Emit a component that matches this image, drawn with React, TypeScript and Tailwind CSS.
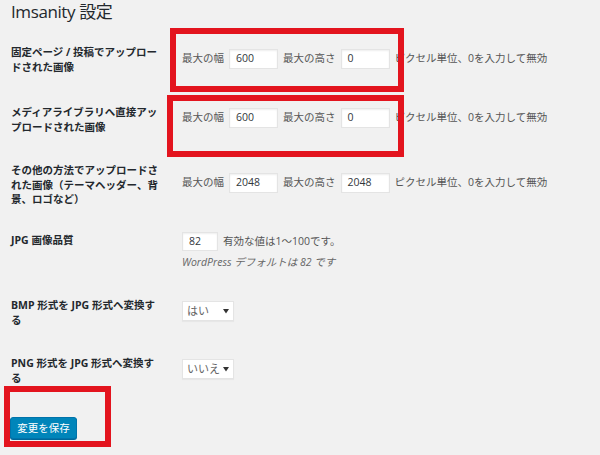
import React from "react";

const FONT = "font-['Open_Sans','Noto_Sans_CJK_JP',sans-serif]";

function TextInput({ value, w = "w-[49px]", h = "h-[20px]" }: { value: string; w?: string; h?: string }) {
  return (
    <div
      className={`${w} ${h} flex items-center bg-white border border-[#e4e4e4] shadow-[inset_0_1px_2px_rgba(0,0,0,0.07)] pl-[6px] text-[10.5px] text-[#32373c]`}
    >
      {value}
    </div>
  );
}

function SizeFields({ w, h }: { w: string; h: string }) {
  return (
    <div className="flex items-center gap-[5px] text-[10.5px] text-[#555]">
      <span>最大の幅</span>
      <TextInput value={w} />
      <span>最大の高さ</span>
      <TextInput value={h} />
      <span>ピクセル単位、0を入力して無効</span>
    </div>
  );
}

function SelectBox({ label }: { label: string }) {
  return (
    <div className="w-[52px] h-[20px] flex items-center justify-between bg-white border border-[#e4e4e4] shadow-[0_1px_1px_rgba(0,0,0,0.04)] pl-[4px] pr-[4px] text-[11px] text-[#666]">
      <span>{label}</span>
      <svg width="6" height="5" viewBox="0 0 6 5">
        <path d="M0 0 L6 0 L3 4.5 Z" fill="#333" />
      </svg>
    </div>
  );
}

function Row({
  h,
  label,
  contentPt,
  labelPt = "pt-0",
  children,
}: {
  h: string;
  label: React.ReactNode;
  contentPt: string;
  labelPt?: string;
  children: React.ReactNode;
}) {
  return (
    <div className={`flex ${h}`}>
      <div
        className={`w-[182px] shrink-0 pl-[11px] ${labelPt} whitespace-nowrap font-bold text-[10.5px] leading-[14.5px] text-[#23282d]`}
      >
        {label}
      </div>
      <div className={contentPt}>{children}</div>
    </div>
  );
}

export default function App() {
  return (
    <div className={`relative w-[600px] h-[455px] overflow-hidden bg-[#f1f1f1] ${FONT}`}>
      <div className="h-[45px] pl-[11px] pt-[1px] text-[17px] leading-[22px] tracking-[-0.4px] text-[#23282d]">
        Imsanity 設定
      </div>

      <Row
        h="h-[60px]"
        contentPt="pt-[4px]"
        label={
          <>
            固定ページ / 投稿でアップロー
            <br />
            ドされた画像
          </>
        }
      >
        <SizeFields w="600" h="0" />
      </Row>

      <Row
        h="h-[58px]"
        contentPt="pt-[3px]"
        label={
          <>
            メディアライブラリへ直接アッ
            <br />
            プロードされた画像
          </>
        }
      >
        <SizeFields w="600" h="0" />
      </Row>

      <Row
        h="h-[69px]"
        contentPt="pt-[10px]"
        label={
          <>
            その他の方法でアップロードさ
            <br />
            れた画像（テーマヘッダー、背
            <br />
            景、ロゴなど）
          </>
        }
      >
        <SizeFields w="2048" h="2048" />
      </Row>

      <Row h="h-[66px]" contentPt="pt-0" labelPt="pt-[1px]" label={<>JPG 画像品質</>}>
        <div className="flex items-center gap-[5px] text-[10.5px] text-[#555]">
          <TextInput value="82" w="w-[36px]" h="h-[19px]" />
          <span>有効な値は1〜100です。</span>
        </div>
        <div className="mt-[4px] text-[10.5px] italic text-[#666]">WordPress デフォルトは 82 です</div>
      </Row>

      <Row
        h="h-[58px]"
        contentPt="pt-[3px]"
        label={
          <>
            BMP 形式を JPG 形式へ変換す
            <br />る
          </>
        }
      >
        <SelectBox label="はい" />
      </Row>

      <Row
        h="h-[58px]"
        contentPt="pt-[3px]"
        label={
          <>
            PNG 形式を JPG 形式へ変換す
            <br />る
          </>
        }
      >
        <SelectBox label="いいえ" />
      </Row>

      <div className="pl-[10px]">
        <button className="w-[67px] h-[22px] rounded-[3px] bg-[#0085ba] border border-[#0073aa] shadow-[0_1px_0_#006799] text-white text-[10.5px] leading-none">
          変更を保存
        </button>
      </div>

      <div className="absolute left-[170px] top-[28px] w-[234px] h-[64px] border-[6px] border-[#e3141e]" />
      <div className="absolute left-[167px] top-[95px] w-[237px] h-[62px] border-[6px] border-[#e3141e]" />
      <div className="absolute left-[4px] top-[386px] w-[107px] h-[61px] border-[6px] border-[#e3141e]" />
    </div>
  );
}
